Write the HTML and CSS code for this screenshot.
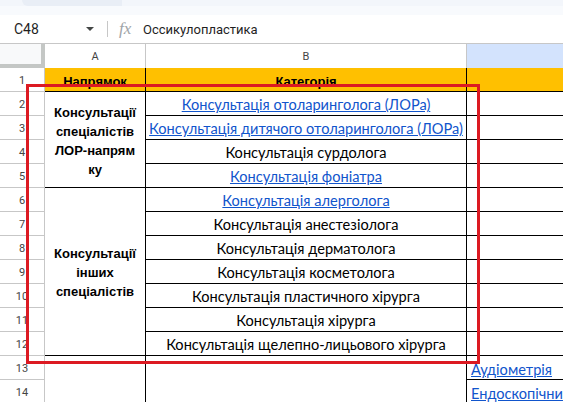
FILE: index.html
```html
<!DOCTYPE html>
<html lang="uk">
<head>
<meta charset="utf-8">
<title>Sheet</title>
<link rel="stylesheet" href="styles.css">
</head>
<body>
<div class="top-strip">
  <div class="strip-dark"><div class="pill"></div></div>
  <div class="strip-light"></div>
</div>
<div class="formula-bar">
  <div class="name-box">C48</div>
  <div class="name-arrow"></div>
  <div class="fb-sep"></div>
  <div class="fx">fx</div>
  <div class="fb-text">Оссикулопластика</div>
</div>
<div class="sheet">
  <div class="corner"></div>
  <div class="col-h">A</div>
  <div class="col-h">B</div>
  <div class="col-h col-sel"></div>

  <div class="row-h r1">1</div>
  <div class="cell yellow bb br hdr">Напрямок</div>
  <div class="cell yellow bb br hdr">Категорія</div>
  <div class="cell yellow bb"></div>

  <div class="row-h">2</div>
  <div class="cell group g1 bb br">Консультації спеціалістів ЛОР-напрям ку</div>
  <div class="cell item bb br"><a href="#">Консультація отоларинголога (ЛОРа)</a></div>
  <div class="cell bb"></div>

  <div class="row-h">3</div>
  <div class="cell item bb br"><a href="#">Консультація дитячого отоларинголога (ЛОРа)</a></div>
  <div class="cell bb"></div>

  <div class="row-h">4</div>
  <div class="cell item bb br">Консультація сурдолога</div>
  <div class="cell bb"></div>

  <div class="row-h">5</div>
  <div class="cell item bb br"><a href="#">Консультація фоніатра</a></div>
  <div class="cell bb"></div>

  <div class="row-h">6</div>
  <div class="cell group g2 bb br">Консультації інших спеціалістів</div>
  <div class="cell item bb br"><a href="#">Консультація алерголога</a></div>
  <div class="cell bb"></div>

  <div class="row-h">7</div>
  <div class="cell item bb br">Консультація анестезіолога</div>
  <div class="cell bb"></div>

  <div class="row-h">8</div>
  <div class="cell item bb br">Консультація дерматолога</div>
  <div class="cell bb"></div>

  <div class="row-h">9</div>
  <div class="cell item bb br">Консультація косметолога</div>
  <div class="cell bb"></div>

  <div class="row-h">10</div>
  <div class="cell item bb br">Консультація пластичного хірурга</div>
  <div class="cell bb"></div>

  <div class="row-h">11</div>
  <div class="cell item bb br">Консультація хірурга</div>
  <div class="cell bb"></div>

  <div class="row-h">12</div>
  <div class="cell item bb br">Консультація щелепно-лицьового хірурга</div>
  <div class="cell bb"></div>

  <div class="row-h">13</div>
  <div class="cell br"></div>
  <div class="cell br"></div>
  <div class="cell bb side"><a href="#">Аудіометрія</a></div>

  <div class="row-h">14</div>
  <div class="cell br"></div>
  <div class="cell br"></div>
  <div class="cell bb side"><a href="#">Ендоскопічни</a></div>
</div>
<div class="red-frame"></div>
</body>
</html>
```
FILE: styles.css
```css
* { box-sizing: border-box; }
html, body { margin: 0; padding: 0; }
body {
  position: relative;
  width: 563px;
  height: 402px;
  overflow: hidden;
  background: #fff;
  font-family: Roboto, "Liberation Sans", Arial, sans-serif;
}

.top-strip { height: 15px; }
.strip-dark {
  height: 6px;
  background: #f3f6fb;
  padding-left: 22px;
}
.pill {
  width: 100px;
  height: 6px;
  background: #e9eef6;
  border-bottom-left-radius: 6px;
}
.strip-light { height: 9px; background: #f8fafd; }

.formula-bar {
  height: 28px;
  display: flex;
  align-items: center;
  padding-left: 14px;
}
.name-box {
  font-size: 14px;
  color: #1f1f1f;
  width: 72px;
}
.name-arrow {
  width: 0;
  height: 0;
  border-left: 4px solid transparent;
  border-right: 4px solid transparent;
  border-top: 4px solid #444746;
  margin-right: 13px;
}
.fb-sep {
  width: 1px;
  height: 16px;
  background: #c7c7c7;
  margin-right: 11px;
}
.fx {
  font-family: "Liberation Serif", "DejaVu Serif", serif;
  font-style: italic;
  font-size: 17px;
  color: #a0a4a8;
  width: 24px;
  line-height: 1;
  margin-top: -2px;
}
.fb-text {
  font-size: 13px;
  color: #1f1f1f;
}

.sheet {
  display: grid;
  grid-template-columns: 45px 101px 321px 96px;
  grid-template-rows: 24px repeat(14, 24px);
  border-top: 1px solid #c7c7c7;
}
.corner {
  background: #f8f9fa;
  border-right: 4px solid #c4c7c5;
  border-bottom: 4px solid #c4c7c5;
}
.col-h {
  display: flex;
  align-items: center;
  justify-content: center;
  font-size: 11px;
  color: #444;
  border-right: 1px solid #c7c7c7;
  padding-top: 1px;
}
.col-sel { background: #d3e3fd; border-right: none; }

.row-h {
  display: flex;
  align-items: center;
  justify-content: center;
  font-size: 11px;
  color: #444;
  border-right: 1px solid #c7c7c7;
  border-bottom: 1px solid #c7c7c7;
  padding-top: 2px;
}

.cell {
  display: flex;
  align-items: center;
  justify-content: center;
  font-family: Lato, "Liberation Sans", sans-serif;
  font-size: 14.6px;
  color: #000;
  white-space: nowrap;
  overflow: hidden;
}
.bb { border-bottom: 1px solid #000; }
.br { border-right: 1px solid #000; }
.yellow { background: #ffc000; }
.hdr {
  font-family: "Liberation Sans", Arial, sans-serif;
  font-weight: bold;
  font-size: 13px;
  align-items: flex-end;
  padding-bottom: 2px;
}
.item { padding-top: 2px; }
.cell a { color: #1155cc; text-decoration: underline; }

.group {
  font-family: "Liberation Sans", Arial, sans-serif;
  font-weight: bold;
  font-size: 13px;
  line-height: 19px;
  white-space: normal;
  text-align: center;
  padding: 2px 8px 0;
}
.g1 { grid-row: span 4; }
.g2 { grid-row: span 7; }

.side {
  justify-content: flex-start;
  padding-left: 4px;
  padding-top: 3px;
}

.red-frame {
  position: absolute;
  left: 26px;
  top: 84px;
  width: 454px;
  height: 280px;
  border: 3px solid #dc1a22;
}
```
